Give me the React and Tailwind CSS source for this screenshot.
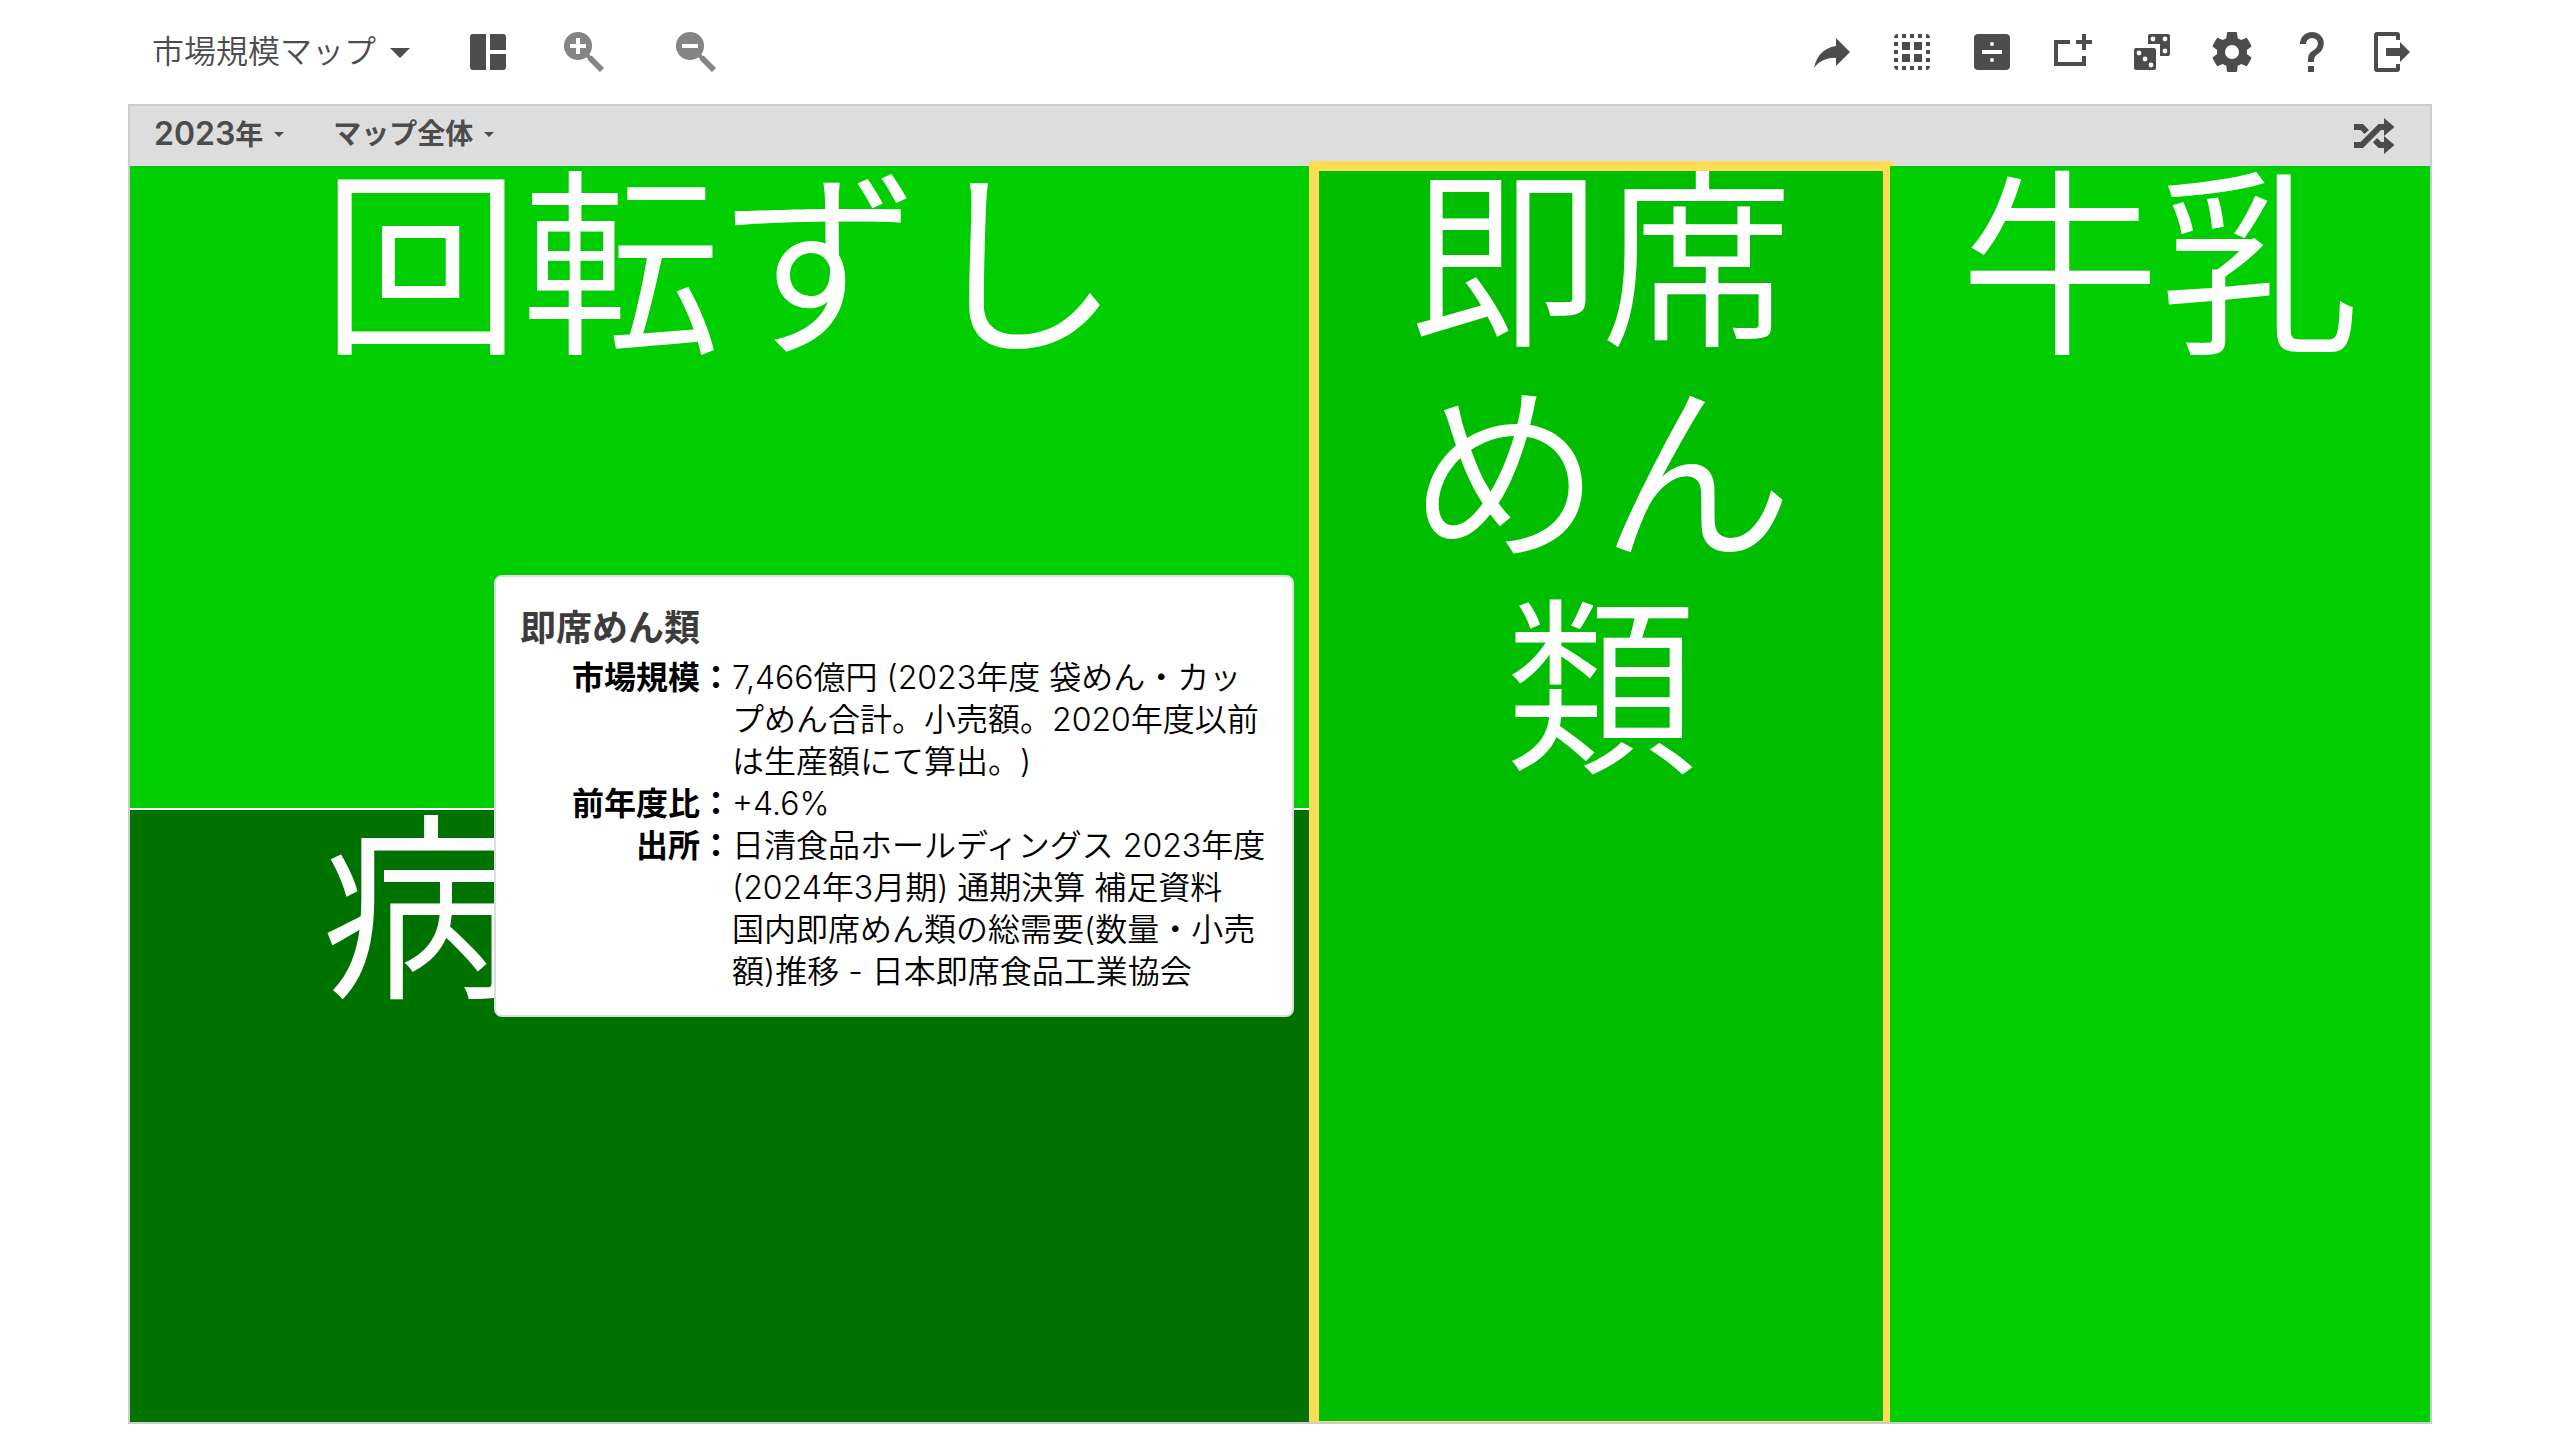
import React from "react";

const ICONS = {
  dashboard: "M4.5 3H11V21H4.5A1.5 1.5 0 0 1 3 19.5V4.5A1.5 1.5 0 0 1 4.5 3ZM13 3H19.5A1.5 1.5 0 0 1 21 4.5V11H13ZM13 13H21V19.5A1.5 1.5 0 0 1 19.5 21H13Z",
  zoomIn: "M9,2A7,7 0 0,1 16,9C16,10.57 15.5,12 14.61,13.19L15.41,14H16L22,20L20,22L14,16V15.41L13.19,14.61C12,15.5 10.57,16 9,16A7,7 0 0,1 2,9A7,7 0 0,1 9,2M8,5V8H5V10H8V13H10V10H13V8H10V5H8Z",
  zoomOut: "M9,2A7,7 0 0,1 16,9C16,10.57 15.5,12 14.61,13.19L15.41,14H16L22,20L20,22L14,16V15.41L13.19,14.61C12,15.5 10.57,16 9,16A7,7 0 0,1 2,9A7,7 0 0,1 9,2M5,8V10H13V8H5Z",
  share: "M21,12L14,5V9C7,10 4,15 3,20C5.5,16.5 9,14.9 14,14.9V19L21,12Z",
  selectAll: "M3 5A2 2 0 0 1 5 3V5ZM7 3H9V5H7ZM11 3H13V5H11ZM15 3H17V5H15ZM19 3A2 2 0 0 1 21 5H19ZM3 7H5V9H3ZM3 11H5V13H3ZM3 15H5V17H3ZM19 7H21V9H19ZM19 11H21V13H19ZM19 15H21V17H19ZM3 19H5V21A2 2 0 0 1 3 19ZM7 19H9V21H7ZM11 19H13V21H11ZM15 19H17V21H15ZM19 19H21A2 2 0 0 1 19 21ZM7 7H11V11H7ZM13 7H17V11H13ZM7 13H11V17H7ZM13 13H17V17H13Z",
  division: "M5 3H19A2 2 0 0 1 21 5V19A2 2 0 0 1 19 21H5A2 2 0 0 1 3 19V5A2 2 0 0 1 5 3ZM7 11V13H17V11ZM12 7A1 1 0 0 0 12 9A1 1 0 0 0 12 7ZM12 15A1 1 0 0 0 12 17A1 1 0 0 0 12 15Z",
  addBox: "M17 3H19V6H22V8H19V11H17V8H14V6H17ZM3 6H11V8H5V17H17V14H19V19H3Z",
  dice: "M4 10H13A1 1 0 0 1 14 11V20A1 1 0 0 1 13 21H4A1 1 0 0 1 3 20V11A1 1 0 0 1 4 10ZM5.5 11.3A1.2 1.2 0 0 0 5.5 13.7A1.2 1.2 0 0 0 5.5 11.3ZM8.5 14.3A1.2 1.2 0 0 0 8.5 16.7A1.2 1.2 0 0 0 8.5 14.3ZM11.5 17.3A1.2 1.2 0 0 0 11.5 19.7A1.2 1.2 0 0 0 11.5 17.3ZM11 3H20A1 1 0 0 1 21 4V13A1 1 0 0 1 20 14H16V8H10V4A1 1 0 0 1 11 3ZM12.5 4.3A1.2 1.2 0 0 0 12.5 6.7A1.2 1.2 0 0 0 12.5 4.3ZM18.5 4.3A1.2 1.2 0 0 0 18.5 6.7A1.2 1.2 0 0 0 18.5 4.3ZM18.5 10.3A1.2 1.2 0 0 0 18.5 12.7A1.2 1.2 0 0 0 18.5 10.3Z",
  settings: "M12,15.5A3.5,3.5 0 0,1 8.5,12A3.5,3.5 0 0,1 12,8.5A3.5,3.5 0 0,1 15.5,12A3.5,3.5 0 0,1 12,15.5M19.43,12.97C19.47,12.65 19.5,12.33 19.5,12C19.5,11.67 19.47,11.34 19.43,11L21.54,9.37C21.73,9.22 21.78,8.95 21.66,8.73L19.66,5.27C19.54,5.05 19.27,4.96 19.05,5.05L16.56,6.05C16.04,5.66 15.5,5.32 14.87,5.07L14.5,2.42C14.46,2.18 14.25,2 14,2H10C9.75,2 9.54,2.18 9.5,2.42L9.13,5.07C8.5,5.32 7.96,5.66 7.44,6.05L4.95,5.05C4.73,4.96 4.46,5.05 4.34,5.27L2.34,8.73C2.21,8.95 2.27,9.22 2.46,9.37L4.57,11C4.53,11.34 4.5,11.67 4.5,12C4.5,12.33 4.53,12.65 4.57,12.97L2.46,14.63C2.27,14.78 2.21,15.05 2.34,15.27L4.34,18.73C4.46,18.95 4.73,19.03 4.95,18.95L7.44,17.94C7.96,18.34 8.5,18.68 9.13,18.93L9.5,21.58C9.54,21.82 9.75,22 10,22H14C14.25,22 14.46,21.82 14.5,21.58L14.87,18.93C15.5,18.67 16.04,18.34 16.56,17.94L19.05,18.95C19.27,19.03 19.54,18.95 19.66,18.73L21.66,15.27C21.78,15.05 21.73,14.78 21.54,14.63L19.43,12.97Z",
  help: "M10,19H13V22H10V19M12,2C17.35,2.22 19.68,7.62 16.5,11.67C15.67,12.67 14.33,13.33 13.67,14.17C13,15 13,16 13,17H10C10,15.33 10,13.92 10.67,12.92C11.33,11.92 12.67,11.33 13.5,10.67C15.92,8.43 15.32,5.26 12,5A3,3 0 0,0 9,8H6A6,6 0 0,1 12,2Z",
  exit: "M4.5 2H14.5A1.5 1.5 0 0 1 16 3.5V6H14V4H5V20H14V18H16V20.5A1.5 1.5 0 0 1 14.5 22H4.5A1.5 1.5 0 0 1 3 20.5V3.5A1.5 1.5 0 0 1 4.5 2ZM9 10H16V7L21 12L16 17V14H9Z",
  shuffle: "M17,3L22.25,7.5L17,12L22.25,16.5L17,21V18H14.26L11.44,15.18L13.56,13.06L15.5,15H17V12L17,9H15.5L6.5,18H2V15H5.26L14.26,6H17V3M2,6H6.5L9.44,8.94L7.32,11.06L5.26,9H2V6Z",
  caret: "M7,10L12,15L17,10H7Z",
};

function Icon({ name, className = "size-12" }) {
  return (
    <svg viewBox="0 0 24 24" className={`${className} shrink-0`} fill="currentColor" aria-hidden="true">
      <path fillRule="evenodd" d={ICONS[name]} />
    </svg>
  );
}

const TOOLS = [
  ["share", "共有"],
  ["selectAll", "すべて選択"],
  ["division", "割り算"],
  ["addBox", "追加"],
  ["dice", "ランダム"],
  ["settings", "設定"],
  ["help", "ヘルプ"],
  ["exit", "終了"],
];

function Lines({ items }) {
  return items.map((t) => (
    <span key={t} className="block whitespace-nowrap">
      {t}
    </span>
  ));
}

const DETAILS = [
  ["市場規模：", ["7,466億円 (2023年度 袋めん・カッ", "プめん合計。小売額。2020年度以前", "は生産額にて算出。)"]],
  ["前年度比：", ["+4.6%"]],
  [
    "出所：",
    [
      "日清食品ホールディングス 2023年度",
      "(2024年3月期) 通期決算 補足資料",
      "国内即席めん類の総需要(数量・小売",
      "額)推移 - 日本即席食品工業協会",
    ],
  ],
];

function Tooltip() {
  return (
    <div
      role="tooltip"
      className="absolute top-[409px] left-[364px] z-20 w-[800px] rounded-lg border-2 border-[#dcdcdc] bg-white px-6 pt-6 pb-[22px] text-left text-black"
    >
      <h2 className="mb-0.5 text-[36px] leading-[54px] font-bold text-[#3c3c3c]">即席めん類</h2>
      <dl className="grid grid-cols-[212px_1fr] text-[32px] leading-[42px] [text-spacing-trim:space-all]">
        {DETAILS.map(([label, lines]) => (
          <React.Fragment key={label}>
            <dt className="text-right font-bold whitespace-nowrap">{label}</dt>
            <dd className="font-[350]">
              <Lines items={lines} />
            </dd>
          </React.Fragment>
        ))}
      </dl>
    </div>
  );
}

export default function App() {
  return (
    <div className="flex h-screen flex-col bg-white px-32 pb-4 font-['Inter','Noto_Sans_CJK_JP',sans-serif] text-[#4c4c4c]" lang="ja">
      <header className="flex h-[104px] shrink-0 items-center justify-between pr-4 pl-6">
        <div className="flex items-center">
          <button className="mr-10 flex items-center text-[32px] leading-12 font-[350]">
            市場規模マップ
            <Icon name="caret" />
          </button>
          <button aria-label="レイアウト" className="mr-12">
            <Icon name="dashboard" />
          </button>
          <button aria-label="拡大" className="mr-16 text-[#848484]">
            <Icon name="zoomIn" />
          </button>
          <button aria-label="縮小" className="text-[#848484]">
            <Icon name="zoomOut" />
          </button>
        </div>
        <nav className="flex items-center gap-8">
          {TOOLS.map(([name, label]) => (
            <button key={name} aria-label={label}>
              <Icon name={name} />
            </button>
          ))}
        </nav>
      </header>

      <main className="flex min-h-0 flex-1 flex-col border-2 border-[#ccc]">
        <div className="flex h-[60px] shrink-0 items-center justify-between bg-[#ddd] pr-8 pl-6">
          <div className="flex items-center gap-[42px] pb-1 text-[28px] leading-10 font-semibold">
            <button className="flex items-center gap-1">
              <span>
                <span className="text-[32px]">2023</span>年
              </span>
              <Icon name="caret" className="size-6" />
            </button>
            <button className="flex items-center gap-1">
              マップ全体
              <Icon name="caret" className="size-6" />
            </button>
          </div>
          <button aria-label="シャッフル">
            <Icon name="shuffle" />
          </button>
        </div>

        <div className="relative grid min-h-0 flex-1 grid-cols-[1182fr_574fr_540fr] gap-0.5 text-center font-[350] text-white">
          <div className="grid min-h-0 min-w-0 grid-rows-[642fr_612fr] gap-0.5">
            <section className="min-h-0 bg-[#00ce00] text-[200px] leading-[200px]">回転ずし</section>
            <section className="min-h-0 bg-[#007200] text-[200px] leading-[200px]">病院給食</section>
          </div>
          <section className="relative min-h-0 min-w-0 bg-[#00bd00] text-[192px] leading-[214px]">
            <div className="-mt-3">
              <Lines items={["即席", "めん", "類"]} />
            </div>
            <div className="absolute -inset-x-[5px] -top-[5px] bottom-0 border-10 border-b border-[#ffdc56]" />
          </section>
          <section className="relative z-10 min-h-0 min-w-0 bg-[#00ce00] text-[200px] leading-[200px]">牛乳</section>
          <Tooltip />
        </div>
      </main>
    </div>
  );
}
